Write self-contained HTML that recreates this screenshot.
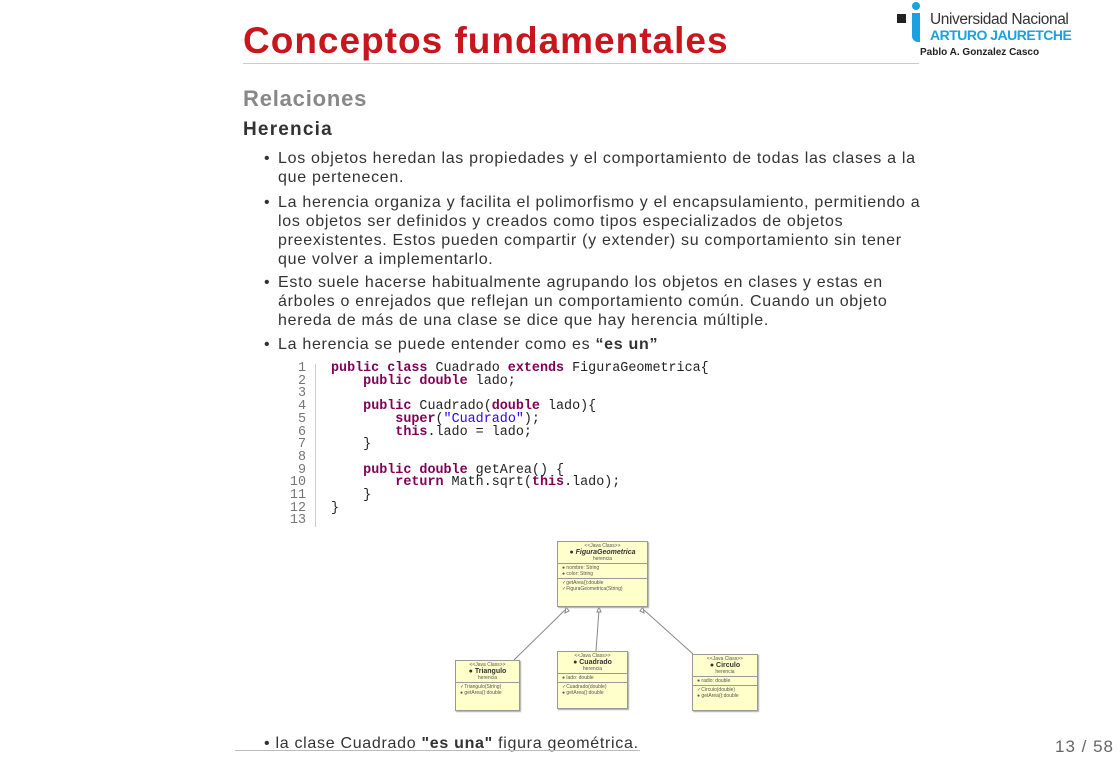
<!DOCTYPE html>
<html><head><meta charset="utf-8"><style>
body{margin:0;width:1120px;height:768px;background:#fff;position:relative;font-family:"Liberation Sans",sans-serif;overflow:hidden}
.a{position:absolute}
h1{position:absolute;left:243px;top:20px;margin:0;font-size:37px;color:#c8161d;font-weight:bold;letter-spacing:1px;white-space:nowrap}
.t{font-size:16px;color:#333;line-height:19px;letter-spacing:0.7px;white-space:nowrap}
ul{position:absolute;left:278px;margin:0;padding:0;list-style:none;width:700px}
li{position:relative;margin-bottom:5px}
li:before{content:"•";position:absolute;left:-14px;top:0}
.code{position:absolute;left:280px;top:363px;font-family:"Liberation Mono",monospace;font-size:13.4px;line-height:12.7px;color:#222;white-space:pre}
.n{display:inline-block;width:26px;text-align:right;color:#777;margin-right:25px}
.k{color:#7f0055;font-weight:bold}.s{color:#2a00ff}
.box{position:absolute;background:#ffffcc;border:1px solid #999;font-size:5px;color:#555;box-shadow:1px 1px 1px #aaa}
.box div{padding:1px 4px}
.hd{text-align:center;border-bottom:1px solid #999}
.hd b{font-size:7px;color:#333}
</style></head><body>
<h1>Conceptos fundamentales</h1>
<div class="a" style="left:243px;top:63px;width:676px;height:1px;background:#ccc"></div>
<div class="a" style="left:897px;top:14px;width:9px;height:9px;background:#222"></div>
<div class="a" style="left:912px;top:2px;width:8px;height:8px;border-radius:50%;background:#1ba1e2"></div>
<div class="a" style="left:912px;top:13px;width:8px;height:29px;background:#1ba1e2;border-radius:0 0 0 6px"></div>
<div class="a" style="left:930px;top:11px;font-size:15.5px;color:#333;letter-spacing:-0.4px">Universidad Nacional</div>
<div class="a" style="left:930px;top:27px;font-size:14px;color:#1ba1e2;font-weight:bold;letter-spacing:-0.5px">ARTURO JAURETCHE</div>
<div class="a" style="left:920px;top:47px;font-size:10px;color:#222;font-weight:bold">Pablo A. Gonzalez Casco</div>
<div class="a" style="left:243px;top:86px;font-size:22px;font-weight:bold;color:#888;letter-spacing:0.8px">Relaciones</div>
<div class="a" style="left:243px;top:119px;font-size:19px;font-weight:bold;color:#333;letter-spacing:1.2px">Herencia</div>
<ul class="t" style="top:149px">
<li style="margin-bottom:6px">Los objetos heredan las propiedades y el comportamiento de todas las clases a la<br>que pertenecen.</li>
<li style="margin-bottom:4px">La herencia organiza y facilita el polimorfismo y el encapsulamiento, permitiendo a<br>los objetos ser definidos y creados como tipos especializados de objetos<br>preexistentes. Estos pueden compartir (y extender) su comportamiento sin tener<br>que volver a implementarlo.</li>
<li>Esto suele hacerse habitualmente agrupando los objetos en clases y estas en<br>árboles o enrejados que reflejan un comportamiento común. Cuando un objeto<br>hereda de más de una clase se dice que hay herencia múltiple.</li>
<li>La herencia se puede entender como es <b>“es un”</b></li>
</ul>
<div class="a" style="left:315px;top:364px;width:1px;height:163px;background:#ccc"></div>
<div class="code"><span class="n">1</span><span class="k">public class</span> Cuadrado <span class="k">extends</span> FiguraGeometrica{
<span class="n">2</span>    <span class="k">public double</span> lado;
<span class="n">3</span>
<span class="n">4</span>    <span class="k">public</span> Cuadrado(<span class="k">double</span> lado){
<span class="n">5</span>        <span class="k">super</span>(<span class="s">"Cuadrado"</span>);
<span class="n">6</span>        <span class="k">this</span>.lado = lado;
<span class="n">7</span>    }
<span class="n">8</span>
<span class="n">9</span>    <span class="k">public double</span> getArea() {
<span class="n">10</span>        <span class="k">return</span> Math.sqrt(<span class="k">this</span>.lado);
<span class="n">11</span>    }
<span class="n">12</span>}
<span class="n">13</span></div>
<svg class="a" style="left:0;top:0" width="1120" height="768"><g stroke="#888" stroke-width="1" fill="#fff">
<line x1="514" y1="660" x2="565" y2="610"/><line x1="596" y1="651" x2="599" y2="610"/><line x1="693" y1="654" x2="644" y2="610"/>
<path d="M566 607l-1 6 4-2z"/><path d="M599 607l-2 5h4z"/><path d="M643 607l1 6-4-2z"/></g></svg>
<div class="box" style="left:557px;top:541px;width:89px;height:64px"><div class="hd">&lt;&lt;Java Class&gt;&gt;<br><b>● <i>FiguraGeometrica</i></b><br>herencia</div><div style="border-bottom:1px solid #999">● nombre: String<br>● color: String</div><div>✓getArea():double<br>✓FiguraGeometrica(String)</div></div>
<div class="box" style="left:455px;top:660px;width:63px;height:49px"><div class="hd">&lt;&lt;Java Class&gt;&gt;<br><b>● Triangulo</b><br>herencia</div><div>✓Triangulo(String)<br>● getArea():double</div></div>
<div class="box" style="left:557px;top:651px;width:69px;height:56px"><div class="hd">&lt;&lt;Java Class&gt;&gt;<br><b>● Cuadrado</b><br>herencia</div><div style="border-bottom:1px solid #999">● lado: double</div><div>✓Cuadrado(double)<br>● getArea():double</div></div>
<div class="box" style="left:692px;top:654px;width:64px;height:55px"><div class="hd">&lt;&lt;Java Class&gt;&gt;<br><b>● Circulo</b><br>herencia</div><div style="border-bottom:1px solid #999">● radio: double</div><div>✓Circulo(double)<br>● getArea():double</div></div>
<div class="a t" style="left:264px;top:734px">• la clase Cuadrado <b>"es una"</b> figura geométrica.</div>
<div class="a" style="left:235px;top:750px;width:405px;height:1px;background:#bbb"></div>
<div class="a" style="left:1055px;top:737px;font-size:17px;color:#666;letter-spacing:1px">13 / 58</div>
</body></html>
